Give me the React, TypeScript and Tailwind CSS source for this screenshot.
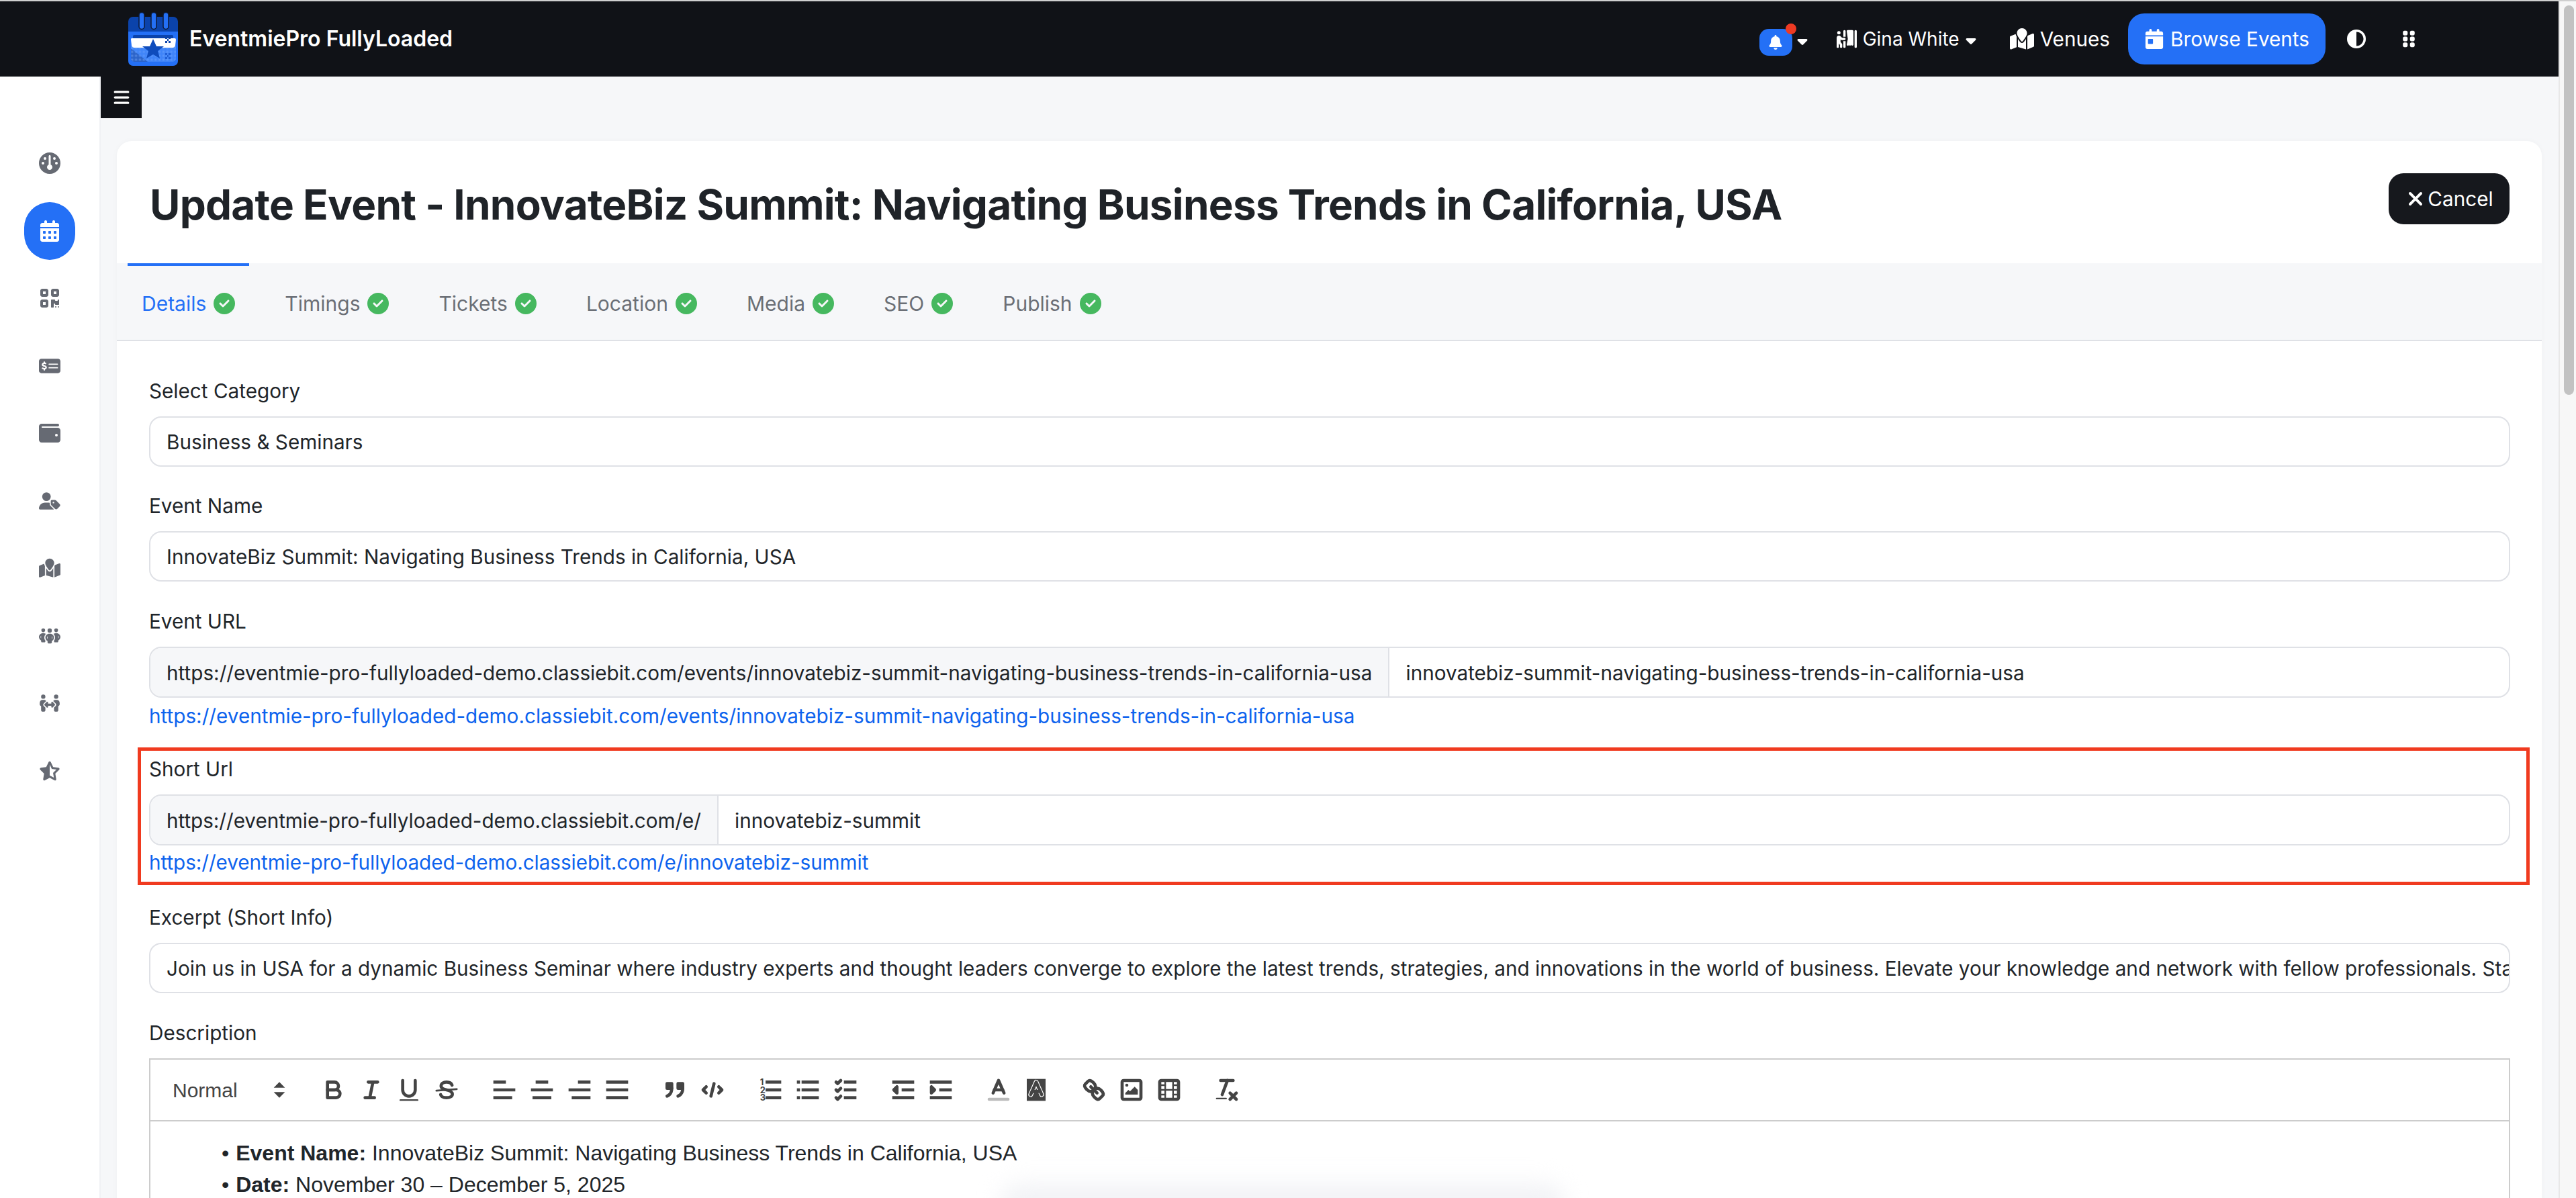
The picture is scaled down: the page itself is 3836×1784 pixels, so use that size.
import type { ReactNode } from "react";
import {
  FaBars,
  FaBell,
  FaCalendarDay,
  FaCalendarDays,
  FaCaretDown,
  FaCircleCheck,
  FaCircleHalfStroke,
  FaGauge,
  FaGripVertical,
  FaMapLocation,
  FaMoneyCheckDollar,
  FaPeopleArrows,
  FaPeopleGroup,
  FaPersonBooth,
  FaQrcode,
  FaStarHalfStroke,
  FaUserTag,
  FaWallet,
  FaXmark,
} from "react-icons/fa6";

const sidebarItems = [
  { icon: FaGauge },
  { icon: FaCalendarDays, active: true },
  { icon: FaQrcode },
  { icon: FaMoneyCheckDollar },
  { icon: FaWallet },
  { icon: FaUserTag },
  { icon: FaMapLocation },
  { icon: FaPeopleGroup },
  { icon: FaPeopleArrows },
  { icon: FaStarHalfStroke },
];

const tabs = ["Details", "Timings", "Tickets", "Location", "Media", "SEO", "Publish"];

const Logo = () => (
  <svg viewBox="0 0 74 80" className="w-[74px] h-[80px] shrink-0">
    <defs>
      <pattern id="dots" width="2" height="2" patternUnits="userSpaceOnUse">
        <rect width="2" height="2" fill="#3f84f8" />
        <rect width="1" height="1" fill="#5b97fa" />
      </pattern>
      <pattern id="hatch" width="2" height="2" patternUnits="userSpaceOnUse">
        <rect width="2" height="2" fill="#2a62c8" />
        <rect width="1" height="1" fill="#5b8fe6" />
      </pattern>
    </defs>
    <path d="M7 7h60a7 7 0 0 1 7 7v16H0V14a7 7 0 0 1 7-7z" fill="#0b43ab" />
    <path d="M0 29h74v44a7 7 0 0 1-7 7H7a7 7 0 0 1-7-7z" fill="#2470f6" />
    <rect x="7" y="34" width="60" height="6" rx="2" fill="#0b43ab" />
    <path d="M4 50h67v19a5 5 0 0 1-5 5H9a5 5 0 0 1-5-5z" fill="url(#dots)" />
    <path d="M4 54l25 20H9a5 5 0 0 1-5-5z" fill="url(#hatch)" />
    <path d="M5 39h64a2 2 0 0 1 2 2l-1 9q-1 3-4 3H9q-3 0-4-3l-1-9q0-2 1-2z" fill="#fff" />
    <path d="M37 40l5 11h11l-9 7 3 11-10-6-10 6 3-11-9-7h11z" fill="#0f4cbc" />
    <g fill="#0b43ab">
      <rect x="55" y="37" width="3" height="3" />
      <rect x="60" y="37" width="3" height="3" />
      <rect x="58" y="40" width="2" height="3" />
      <rect x="55" y="43" width="3" height="3" />
      <rect x="60" y="43" width="3" height="3" />
    </g>
    <g fill="#1f5fd6">
      <rect x="55" y="61" width="3" height="3" />
      <rect x="60" y="61" width="3" height="3" />
      <rect x="58" y="64" width="2" height="3" />
      <rect x="55" y="67" width="3" height="3" />
      <rect x="60" y="67" width="3" height="3" />
    </g>
    {[16, 34, 52].map((x) => (
      <rect key={x} x={x} y="0.5" width="8" height="25" rx="4" fill="#2470f6" stroke="#0c1a38" strokeWidth="1.5" />
    ))}
  </svg>
);

const Field = ({ label, children }: { label: string; children: ReactNode }) => (
  <div>
    <div className="text-[29.7px] leading-[46px] text-[#212529] mb-[15px]">{label}</div>
    {children}
  </div>
);

const TextBox = ({ children }: { children: ReactNode }) => (
  <div className="h-[75px] pt-[2px] border-2 border-[#dfe1e6] rounded-[18px] px-[24px] flex items-center text-[29.7px] text-[#212529] whitespace-nowrap overflow-hidden">
    {children}
  </div>
);

const AddonBox = ({ prefix, value, prefixWidth }: { prefix: string; value: string; prefixWidth?: string }) => (
  <div className="h-[76px] border-2 border-[#dfe1e6] rounded-[18px] flex items-center text-[29.7px] text-[#212529] whitespace-nowrap overflow-hidden">
    <div className={`h-full pt-[2px] pl-[24px] pr-[24px] flex items-center bg-[#f6f7f9] border-r-2 border-[#dfe1e6] ${prefixWidth ?? ""}`}>
      {prefix}
    </div>
    <div className="pt-[2px] px-[24px]">{value}</div>
  </div>
);

const UrlLink = ({ children }: { children: ReactNode }) => (
  <div className="text-[29.7px] leading-[46px] text-[#0d63ee]">{children}</div>
);

// quill toolbar glyph, 18 unit grid
const Q = ({ children }: { children: ReactNode }) => (
  <span className="w-[56px] h-[48px] flex items-center justify-center">
    <svg
      viewBox="0 0 18 18"
      className="w-[42px] h-[42px]"
      fill="none"
      stroke="#444"
      strokeWidth="2"
      strokeLinecap="round"
      strokeLinejoin="round"
    >
      {children}
    </svg>
  </span>
);

const Group = ({ children }: { children: ReactNode }) => <div className="flex">{children}</div>;

const lines = (rows: [number, number, number][]) =>
  rows.map(([x1, x2, y]) => <line key={`${x1}-${x2}-${y}`} x1={x1} x2={x2} y1={y} y2={y} strokeLinecap="square" />);

const Toolbar = () => (
  <div className="h-[94px] border-2 border-[#ccc] flex items-center pl-[16px] gap-[30px]">
    <div className="w-[199px] flex items-center justify-between pl-[17px] pr-[8px] font-['Liberation_Sans',sans-serif] text-[30px] text-[#444]">
      Normal
      <svg viewBox="0 0 18 18" className="w-[30px] h-[36px]" fill="#444">
        <polygon points="9 2 14 7 4 7" />
        <polygon points="9 16 14 11 4 11" />
      </svg>
    </div>
    <Group>
      <Q>
        <path d="M5,4H9.5A2.5,2.5,0,0,1,12,6.5v0A2.5,2.5,0,0,1,9.5,9H5A0,0,0,0,1,5,9V4A0,0,0,0,1,5,4Z" />
        <path d="M5,9h5.5A2.5,2.5,0,0,1,13,11.5v0A2.5,2.5,0,0,1,10.5,14H5a0,0,0,0,1,0,0V9A0,0,0,0,1,5,9Z" />
      </Q>
      <Q>
        <line x1="7" x2="13" y1="4" y2="4" />
        <line x1="5" x2="11" y1="14" y2="14" />
        <line x1="8" x2="10" y1="14" y2="4" />
      </Q>
      <Q>
        <path d="M5,3V9a4,4,0,0,0,4,4H9a4,4,0,0,0,4-4V3" />
        <rect x="3" y="15" width="12" height="1" rx="0.5" fill="#444" stroke="none" />
      </Q>
      <Q>
        <line x1="15.5" x2="2.5" y1="8.5" y2="9.5" strokeWidth="1.2" />
        <path d="M12.5 6C12 4.5 10.5 4 9 4 7 4 5.5 5 5.5 6.5 5.5 8 7 8.5 9 9c2.2.5 3.7 1.2 3.7 2.8C12.7 13.2 11 14 9 14 7 14 5.5 13.2 5.2 12" />
      </Q>
    </Group>
    <Group>
      <Q>{lines([[3, 15, 9], [3, 13, 14], [3, 9, 4]])}</Q>
      <Q>{lines([[3, 15, 9], [4, 14, 14], [6, 12, 4]])}</Q>
      <Q>{lines([[3, 15, 9], [5, 15, 14], [9, 15, 4]])}</Q>
      <Q>{lines([[3, 15, 9], [3, 15, 14], [3, 15, 4]])}</Q>
    </Group>
    <Group>
      <Q>
        <rect x="4" y="5" width="3" height="3" fill="#444" />
        <rect x="11" y="5" width="3" height="3" fill="#444" />
        <path d="M7,8c0,4.031-3,5-3,5" />
        <path d="M14,8c0,4.031-3,5-3,5" />
      </Q>
      <Q>
        <polyline points="5 7 3 9 5 11" />
        <polyline points="13 7 15 9 13 11" />
        <line x1="10" x2="8" y1="5" y2="13" />
      </Q>
    </Group>
    <Group>
      <Q>
        {lines([[7, 15, 4], [7, 15, 9], [7, 15, 14]])}
        <g fill="#444" stroke="none" fontSize="5.5" fontWeight="700" fontFamily="Inter, sans-serif">
          <text x="2.5" y="6">1</text>
          <text x="2.5" y="11">2</text>
          <text x="2.5" y="16">3</text>
        </g>
      </Q>
      <Q>{lines([[6, 15, 4], [6, 15, 9], [6, 15, 14], [3, 3, 4], [3, 3, 9], [3, 3, 14]])}</Q>
      <Q>
        {lines([[9, 15, 4], [9, 15, 9], [9, 15, 14]])}
        <polyline points="3 4 4 5 6 3" />
        <polyline points="3 14 4 15 6 13" />
        <polyline points="3 9 4 10 6 8" />
      </Q>
    </Group>
    <Group>
      <Q>
        {lines([[3, 15, 14], [3, 15, 4], [9, 15, 9]])}
        <polygon points="5 7 5 11 3 9 5 7" fill="#444" />
      </Q>
      <Q>
        {lines([[3, 15, 14], [3, 15, 4], [9, 15, 9]])}
        <polygon points="3 7 3 11 5 9 3 7" fill="#444" />
      </Q>
    </Group>
    <Group>
      <Q>
        <line x1="3" x2="15" y1="15" y2="15" stroke="#bbb" />
        <polyline points="5.5 11 9 3 12.5 11" />
        <line x1="11.63" x2="6.37" y1="9" y2="9" />
      </Q>
      <Q>
        <defs>
          <pattern id="bgHatch" width="1.5" height="1.5" patternUnits="userSpaceOnUse" patternTransform="rotate(45)">
            <rect width="0.5" height="1.5" fill="#888" />
          </pattern>
        </defs>
        <rect x="3" y="2" width="12" height="14" fill="url(#bgHatch)" stroke="none" />
        <polyline points="5.5 12 9 4 12.5 12" stroke="#fff" strokeWidth="3" />
        <polyline points="5.5 12 9 4 12.5 12" />
        <line x1="11.63" x2="6.37" y1="10" y2="10" />
      </Q>
    </Group>
    <Group>
      <Q>
        <line x1="7" x2="11" y1="7" y2="11" />
        <path d="M8.9,4.577a3.476,3.476,0,0,1,.36,4.679A3.476,3.476,0,0,1,4.577,8.9C3.185,7.5,2.35,6.4,3.453,5.3L5.3,3.453C6.4,2.35,7.5,3.185,8.9,4.577Z" />
        <path d="M13.423,9.1a3.476,3.476,0,0,0-4.679-.36,3.476,3.476,0,0,0,.36,4.679c1.392,1.392,2.5,2.227,3.6,1.124L14.547,12.7C15.65,11.6,14.815,10.5,13.423,9.1Z" />
      </Q>
      <Q>
        <rect x="3" y="3" width="12" height="12" rx="1" />
        <circle cx="6" cy="6" r="1" fill="#444" stroke="none" />
        <polyline points="5 12 5 11 7 9 8 10 11 7 13 9 13 12 5 12" fill="#444" stroke="none" />
      </Q>
      <Q>
        <rect x="3" y="3" width="12" height="12" rx="1" />
        <line x1="6.5" x2="6.5" y1="3" y2="15" strokeWidth="1" />
        <line x1="11.5" x2="11.5" y1="3" y2="15" strokeWidth="1" />
        <line x1="6.5" x2="11.5" y1="9" y2="9" strokeWidth="1" />
        <line x1="3.5" x2="6.5" y1="6" y2="6" strokeWidth="1" />
        <line x1="3.5" x2="6.5" y1="9" y2="9" strokeWidth="1" />
        <line x1="3.5" x2="6.5" y1="12" y2="12" strokeWidth="1" />
        <line x1="11.5" x2="14.5" y1="6" y2="6" strokeWidth="1" />
        <line x1="11.5" x2="14.5" y1="9" y2="9" strokeWidth="1" />
        <line x1="11.5" x2="14.5" y1="12" y2="12" strokeWidth="1" />
      </Q>
    </Group>
    <Group>
      <Q>
        <line x1="5" x2="13" y1="3" y2="3" />
        <line x1="6" x2="9.35" y1="12" y2="3" />
        <line x1="11" x2="15" y1="11" y2="15" />
        <line x1="15" x2="11" y1="11" y2="15" />
        <rect x="2" y="14" width="7" height="1" rx="0.5" fill="#444" stroke="none" />
      </Q>
    </Group>
  </div>
);

const Navbar = () => (
  <nav className="h-[112px] bg-[#101217] flex items-center justify-between pl-[191px] pr-[209px] text-white shrink-0">
    <div className="flex items-center gap-[17px]">
      <Logo />
      <span className="text-[32px] font-semibold">EventmiePro FullyLoaded</span>
    </div>
    <div className="flex items-center text-[29.7px]">
      <div className="relative w-[49px] h-[40px] mt-[10px] rounded-[14px] bg-[#2470f6] flex items-center justify-center">
        <FaBell className="size-[22px]" />
        <span className="absolute -top-[8px] -right-[6px] size-[16px] rounded-full bg-[#ee3a23]" />
      </div>
      <FaCaretDown className="size-[24px] ml-[3px] mt-[6px]" />
      <FaPersonBooth className="size-[30px] ml-[39px]" />
      <span className="ml-[9px] text-[28px]">Gina White</span>
      <FaCaretDown className="size-[24px] ml-[5px] mt-[4px]" />
      <FaMapLocation className="size-[36px] ml-[46px]" />
      <span className="ml-[9px]">Venues</span>
      <div className="ml-[27px] w-[294px] h-[76px] rounded-[24px] bg-[#2470f6] flex items-center justify-center gap-[9px]">
        <FaCalendarDay className="size-[30px]" />
        Browse Events
      </div>
      <FaCircleHalfStroke className="size-[28px] ml-[32px]" />
      <FaGripVertical className="size-[28px] ml-[50px]" />
    </div>
  </nav>
);

const Sidebar = () => (
  <aside className="w-[150px] shrink-0 bg-white border-r-2 border-[#f0f1f4] pt-[79px] flex flex-col items-center">
    {sidebarItems.map(({ icon: Icon, active }, i) => (
      <div key={i} className="h-[100.5px] flex items-center justify-center">
        <div
          className={
            active
              ? "w-[76px] h-[86px] rounded-full bg-[#2470f6] text-white flex items-center justify-center"
              : "w-[76px] h-[86px] text-[#666a73] flex items-center justify-center"
          }
        >
          <Icon className="h-[32px] w-auto" />
        </div>
      </div>
    ))}
  </aside>
);

export default function App() {
  return (
    <div className="relative h-[1784px] overflow-hidden bg-[#f6f7f9] font-['Inter',sans-serif]">
      <div className="h-[2px] bg-[#cfcfcf]" />
      <div className="flex h-[1782px]">
        <div className="flex-1 min-w-0 flex flex-col">
          <Navbar />
          <div className="flex flex-1 min-h-0">
            <Sidebar />
            <main className="flex-1 min-w-0">
              <div className="w-[61px] h-[62px] bg-[#101217] text-white flex items-center justify-center">
                <FaBars className="size-[26px]" />
              </div>
              <section className="mt-[34px] ml-[24px] mr-[25px] bg-white rounded-t-[22px] shadow-[0_0_8px_rgba(0,0,0,0.03)]">
                <div className="h-[182px] flex items-start justify-between pl-[49px] pr-[48px]">
                  <h1 className="mt-[57px] text-[62px] leading-[76px] font-bold text-[#1f2328] tracking-[-0.75px]">
                    Update Event - InnovateBiz Summit: Navigating Business Trends in California, USA
                  </h1>
                  <button className="mt-[48px] w-[180px] h-[76px] rounded-[22px] bg-[#16181d] text-white text-[29.7px] flex items-center justify-center gap-[2px]">
                    <FaXmark className="size-[32px]" />
                    Cancel
                  </button>
                </div>
                <div className="h-[116px] bg-[#f6f7f9] border-b-2 border-[#dfe1e6] pl-[16px] flex gap-[32px]">
                  {tabs.map((tab, i) => (
                    <div
                      key={tab}
                      className={
                        i === 0
                          ? "px-[21px] pt-[2px] border-t-4 border-[#2470f6] text-[#2470f6] text-[30px] flex items-center gap-[11px]"
                          : "px-[21px] pt-[2px] border-t-4 border-transparent text-[#6b6f76] text-[30px] flex items-center gap-[11px]"
                      }
                    >
                      {tab}
                      <FaCircleCheck className="size-[32px] text-[#46b85f]" />
                    </div>
                  ))}
                </div>
                <div className="pt-[51px] pl-[48px] pr-[47px] flex flex-col">
                  <Field label="Select Category">
                    <TextBox>Business &amp; Seminars</TextBox>
                  </Field>
                  <div className="mt-[35px]">
                    <Field label="Event Name">
                      <TextBox>InnovateBiz Summit: Navigating Business Trends in California, USA</TextBox>
                    </Field>
                  </div>
                  <div className="mt-[36px]">
                    <Field label="Event URL">
                      <AddonBox
                        prefix="https://eventmie-pro-fullyloaded-demo.classiebit.com/events/innovatebiz-summit-navigating-business-trends-in-california-usa"
                        value="innovatebiz-summit-navigating-business-trends-in-california-usa"
                      />
                    </Field>
                    <div className="mt-[4px]">
                      <UrlLink>
                        https://eventmie-pro-fullyloaded-demo.classiebit.com/events/innovatebiz-summit-navigating-business-trends-in-california-usa
                      </UrlLink>
                    </div>
                  </div>
                  <div className="mt-[33px]">
                    <Field label="Short Url">
                      <AddonBox
                        prefix="https://eventmie-pro-fullyloaded-demo.classiebit.com/e/"
                        value="innovatebiz-summit"
                        prefixWidth="w-[846px] tracking-[-0.05px]"
                      />
                    </Field>
                    <div className="mt-[2px] tracking-[-0.06px]">
                      <UrlLink>https://eventmie-pro-fullyloaded-demo.classiebit.com/e/innovatebiz-summit</UrlLink>
                    </div>
                  </div>
                  <div className="mt-[36px]">
                    <Field label="Excerpt (Short Info)">
                      <TextBox>
                        Join us in USA for a dynamic Business Seminar where industry experts and thought leaders converge to
                        explore the latest trends, strategies, and innovations in the world of business. Elevate your
                        knowledge and network with fellow professionals. Stay
                      </TextBox>
                    </Field>
                  </div>
                  <div className="mt-[36px]">
                    <Field label="Description">
                      <Toolbar />
                      <div className="border-x-2 border-[#ccc] h-[200px] pt-[24px] pl-[106px] font-['Liberation_Sans',sans-serif] text-[32px] leading-[47px] text-[#212529]">
                        <div className="flex gap-[10px]">
                          <span>•</span>
                          <span>
                            <strong className="font-bold">Event Name:</strong> InnovateBiz Summit: Navigating Business Trends in California, USA
                          </span>
                        </div>
                        <div className="flex gap-[10px]">
                          <span>•</span>
                          <span>
                            <strong className="font-bold">Date:</strong> November 30 – December 5, 2025
                          </span>
                        </div>
                      </div>
                    </Field>
                  </div>
                </div>
              </section>
            </main>
          </div>
        </div>
        <div className="w-[26px] shrink-0 bg-[#f7f7f7] border-l-2 border-[#e8e8e8] pt-[6px] pl-[6px]">
          <div className="w-[15px] h-[580px] rounded-full bg-[#c2c2c2]" />
        </div>
      </div>
      {/* red highlight drawn over the short url group */}
      <div className="absolute left-[205px] top-[1113px] w-[3562px] h-[205px] border-[5px] border-[#f03a1f]" />
      {/* faint toast shadow coming up from the bottom edge */}
      <div className="absolute left-[1490px] top-[1762px] w-[840px] h-[80px] rounded-[30px] bg-[#f2f3f6] blur-[16px]" />
    </div>
  );
}
